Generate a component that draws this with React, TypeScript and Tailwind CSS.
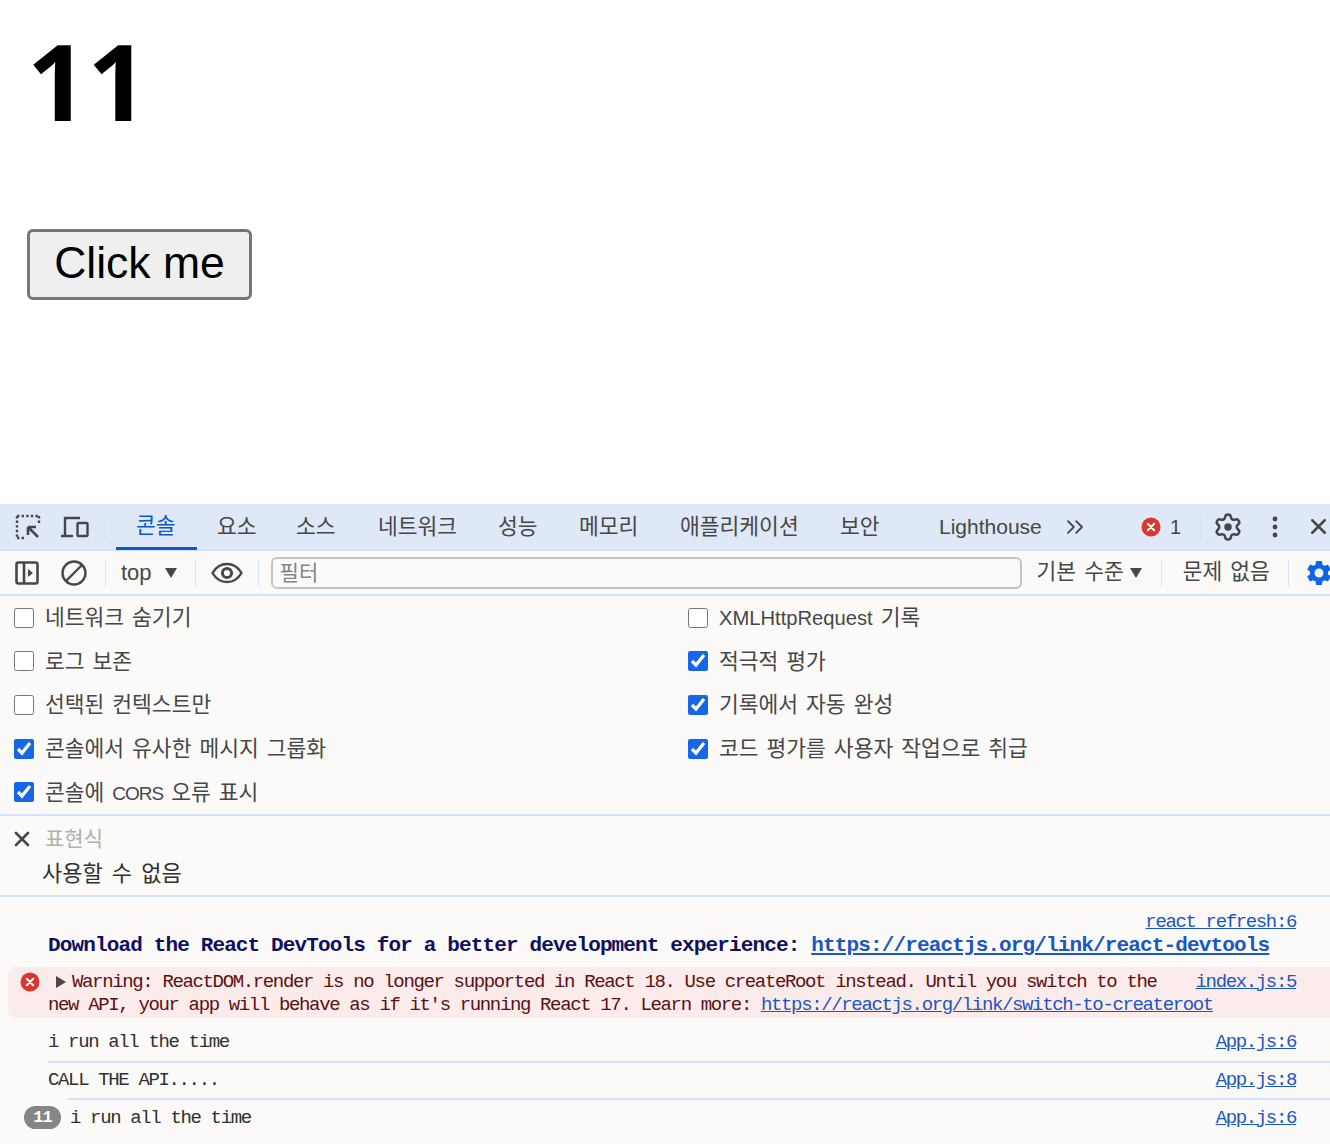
import { ChevronsRight, X } from "lucide-react";
import type { ReactNode } from "react";
import { MdSettings } from "react-icons/md";

const ui = "font-['Liberation_Sans','Noto_Sans_CJK_KR',sans-serif]";
const mono = "font-['Liberation_Mono','Noto_Sans_CJK_KR',monospace]";

const tabs = [
  { label: "콘솔", width: "w-[81px]", active: true },
  { label: "요소", width: "w-[79px]" },
  { label: "소스", width: "w-[82px]" },
  { label: "네트워크", width: "w-[120px]" },
  { label: "성능", width: "w-[81px]" },
  { label: "메모리", width: "w-[101px]" },
  { label: "애플리케이션", width: "w-[160px]" },
  { label: "보안", width: "w-[80px]" },
];

const leftOptions: { id: string; label: ReactNode; checked: boolean }[] = [
  { id: "hide-network", label: "네트워크 숨기기", checked: false },
  { id: "preserve-log", label: "로그 보존", checked: false },
  { id: "selected-context", label: "선택된 컨텍스트만", checked: false },
  { id: "group-similar", label: "콘솔에서 유사한 메시지 그룹화", checked: true },
  {
    id: "cors",
    label: (
      <>
        콘솔에 <span className="text-[19px] tracking-[-1px]">CORS</span> 오류 표시
      </>
    ),
    checked: true,
  },
];

const rightOptions: { id: string; label: ReactNode; checked: boolean }[] = [
  {
    id: "xhr",
    label: (
      <>
        <span className="text-[20.2px]">XMLHttpRequest</span> 기록
      </>
    ),
    checked: false,
  },
  { id: "eager", label: "적극적 평가", checked: true },
  { id: "autocomplete", label: "기록에서 자동 완성", checked: true },
  { id: "user-action", label: "코드 평가를 사용자 작업으로 취급", checked: true },
];

function Sep({ className = "" }: { className?: string }) {
  return <div className={`w-px h-[26px] bg-[#d3e3fd] shrink-0 ${className}`} />;
}

function ErrorIcon({ className = "" }: { className?: string }) {
  return (
    <svg viewBox="0 0 20 20" className={`w-5 h-5 shrink-0 ${className}`}>
      <circle cx="10" cy="10" r="9.5" fill="#dc362e" />
      <path d="M6.8 6.8l6.4 6.4M13.2 6.8l-6.4 6.4" stroke="#fff" strokeWidth="2" strokeLinecap="round" />
    </svg>
  );
}

function Gear({ className = "" }: { className?: string }) {
  return (
    <svg viewBox="0 0 24 24" className={`shrink-0 ${className}`} fill="none" stroke="#474747" strokeWidth="2">
      <path d="M9.671 4.136a2.34 2.34 0 0 1 4.659 0 2.34 2.34 0 0 0 3.319 1.915 2.34 2.34 0 0 1 2.33 4.033 2.34 2.34 0 0 0 0 3.831 2.34 2.34 0 0 1-2.33 4.033 2.34 2.34 0 0 0-3.319 1.915 2.34 2.34 0 0 1-4.659 0 2.34 2.34 0 0 0-3.32-1.915 2.34 2.34 0 0 1-2.33-4.033 2.34 2.34 0 0 0 0-3.831A2.34 2.34 0 0 1 6.35 6.051a2.34 2.34 0 0 0 3.319-1.915" />
      <circle cx="12" cy="12" r="3" fill="#474747" stroke="none" />
    </svg>
  );
}

function Option({ label, checked }: { label: ReactNode; checked: boolean }) {
  return (
    <label className="flex items-center h-[43.6px]">
      <input
        type="checkbox"
        defaultChecked={checked}
        className="w-5 h-5 ml-[14px] mr-[11px] shrink-0 accent-[#1667e8]"
      />
      <span className="mt-[1px] text-[21.5px] [word-spacing:2px] text-[#474747] whitespace-nowrap">{label}</span>
    </label>
  );
}

function Source({ name }: { name: string }) {
  return <span className="ml-auto mr-[34px] underline text-[#1a56c4]">{name}</span>;
}

export default function App() {
  return (
    <div className={`w-[1330px] h-[1144px] overflow-hidden bg-white ${ui}`}>
      {/* PAGE */}
      <div className="h-[504px] pl-[27px]">
        <h1 className="pt-[17px] pb-[3px] text-[106px] leading-[126px] font-bold text-black font-['Open_Sans',sans-serif] [font-kerning:none]">
          11
        </h1>
        <button className="block mt-[83px] w-[225px] h-[71px] pb-[3px] bg-[#efefef] border-[3px] border-[#767676] rounded-[6px] text-[44.5px] leading-[44px] text-black">
          Click me
        </button>
      </div>

      {/* DEVTOOLS */}
      <div className="h-[640px] bg-[#fbfaf9] text-[#474747]">
        {/* TAB BAR */}
        <div className="flex items-center h-[47px] bg-[#dfe8f6] border-b-2 border-[#d3e3fd]">
          <svg viewBox="0 0 26 26" className="w-[26px] h-[26px] ml-[15px] shrink-0" fill="none" stroke="#474747">
            <path d="M2 2h22M2 2v22M2 24h8M24 2v8" strokeWidth="2.4" strokeDasharray="2.4 2.2" />
            <path d="M13 13l10 10M13 13h8M13 13v8" strokeWidth="2.6" />
          </svg>
          <svg viewBox="0 0 30 24" className="w-[30px] h-6 ml-[19px] shrink-0" fill="none" stroke="#474747" strokeWidth="2.4">
            <path d="M5 20V3h15M1 21h12" />
            <rect x="17.5" y="8" width="10" height="13" rx="1" />
          </svg>
          <Sep className="ml-[15px] mr-[10px]" />
          {tabs.map((tab) => (
            <div
              key={tab.label}
              className={`${tab.width} h-[47px] pl-5 pt-[2px] flex items-center shrink-0 text-[21.5px] whitespace-nowrap ${
                tab.active ? "text-[#0b57d0] border-b-[3px] border-[#0b57d0]" : ""
              }`}
            >
              {tab.label}
            </div>
          ))}
          <span className="ml-[39px] w-[122px] shrink-0 text-[21px]">Lighthouse</span>
          <ChevronsRight className="w-[28px] h-[28px] shrink-0 text-[#474747]" strokeWidth={1.6} />
          <ErrorIcon className="ml-[52px]" />
          <span className="ml-[9px] text-[20px]">1</span>
          <Sep className="ml-[19px]" />
          <Gear className="w-[30px] h-[30px] ml-[12px]" />
          <svg viewBox="0 0 6 22" className="w-[6px] h-[22px] ml-[29px] shrink-0" fill="#474747">
            <circle cx="3" cy="3" r="2.4" />
            <circle cx="3" cy="11" r="2.4" />
            <circle cx="3" cy="19" r="2.4" />
          </svg>
          <X className="w-[25px] h-[25px] ml-[28px] shrink-0 text-[#474747]" strokeWidth={2.4} />
        </div>

        {/* FILTER BAR */}
        <div className="flex items-center h-[45px] border-b-2 border-[#d3e3fd] overflow-hidden">
          <svg viewBox="0 0 24 24" className="w-6 h-6 ml-[15px] shrink-0" fill="none" stroke="#474747" strokeWidth="2.6">
            <rect x="1.5" y="1.5" width="21" height="21" rx="2" />
            <path d="M9 2v20" />
            <path d="M13 8l5 4-5 4z" fill="#474747" stroke="none" />
          </svg>
          <svg viewBox="0 0 26 26" className="w-[26px] h-[26px] ml-[22px] shrink-0" fill="none" stroke="#474747" strokeWidth="2.4">
            <circle cx="13" cy="13" r="11.5" />
            <path d="M5 21L21 5" />
          </svg>
          <Sep className="ml-[18px]" />
          <span className="ml-[15px] text-[22px]">top</span>
          <span className="ml-[13px] w-0 h-0 border-x-[6.5px] border-x-transparent border-t-[10px] border-t-[#474747]" />
          <Sep className="ml-[18px]" />
          <svg viewBox="0 0 32 22" className="w-8 h-[22px] ml-[15px] shrink-0" fill="none" stroke="#474747" strokeWidth="2.4">
            <path d="M1.5 11C5 5 10 2 16 2s11 3 14.5 9C27 17 22 20 16 20S5 17 1.5 11z" />
            <circle cx="16" cy="11" r="4.6" strokeWidth="3" />
          </svg>
          <Sep className="ml-[15px]" />
          <div className="ml-[12px] w-[751px] h-[32px] px-[7px] shrink-0 flex items-center rounded-[6px] border-2 border-[#c4c4c4] bg-[#fbfaf9] text-[21px] text-[#80868b]">
            필터
          </div>
          <span className="ml-[15px] text-[21.5px] [word-spacing:2px] whitespace-nowrap">기본 수준</span>
          <span className="ml-[6px] w-0 h-0 border-x-[6.5px] border-x-transparent border-t-[10px] border-t-[#474747]" />
          <Sep className="ml-[19px]" />
          <span className="ml-[21px] text-[21.5px] [word-spacing:2px] whitespace-nowrap">문제 없음</span>
          <Sep className="ml-[18px]" />
          <MdSettings className="w-[30px] h-[30px] ml-[15px] shrink-0 text-[#0b65e8]" />
        </div>

        {/* SETTINGS */}
        <div className="grid grid-cols-[674px_1fr] h-[220px] border-b-2 border-[#d3e3fd]">
          <div>
            {leftOptions.map((o) => (
              <Option key={o.id} label={o.label} checked={o.checked} />
            ))}
          </div>
          <div>
            {rightOptions.map((o) => (
              <Option key={o.id} label={o.label} checked={o.checked} />
            ))}
          </div>
        </div>

        {/* LIVE EXPRESSION */}
        <div className="h-[81px] border-b-2 border-[#d3e3fd]">
          <div className="flex items-center h-[44px] pt-[2px]">
            <X className="w-[24px] h-[24px] ml-[10px] shrink-0 text-[#474747]" strokeWidth={2.6} />
            <span className="ml-[11px] text-[21px] text-[#b0b0b0]">표현식</span>
          </div>
          <div className="pl-[42px] text-[22px] [word-spacing:3px] leading-[28px] text-[#303030]">사용할 수 없음</div>
        </div>

        {/* CONSOLE */}
        <div className={`${mono} text-[19px] leading-[23px] tracking-[-1.36px] text-[#303030] whitespace-pre`}>
          <div className="flex justify-end h-[37px] pt-[14px]">
            <Source name="react_refresh:6" />
          </div>
          <div className="h-[24px] pl-[48px] text-[21px] tracking-[-0.86px] font-bold text-[#101060]">
            Download the React DevTools for a better development experience:{" "}
            <span className="underline text-[#1a56c4]">https://reactjs.org/link/react-devtools</span>
          </div>
          <div className="mt-[9px] ml-2 h-[51px] rounded-l-[8px] bg-[#fcebeb] text-[#5c1010] pt-[3px]">
            <div className="flex items-center h-[24px]">
              <ErrorIcon className="ml-[12px]" />
              <span className="ml-[16px] w-0 h-0 border-y-[6px] border-y-transparent border-l-[10px] border-l-[#474747]" />
              <span className="ml-[6px]">
                Warning: ReactDOM.render is no longer supported in React 18. Use createRoot instead. Until you switch to the
              </span>
              <Source name="index.js:5" />
            </div>
            <div className="pl-[40px]">
              new API, your app will behave as if it's running React 17. Learn more:{" "}
              <span className="underline text-[#1a56c4]">https://reactjs.org/link/switch-to-createroot</span>
            </div>
          </div>
          <div className="flex items-center h-[43px] pt-[6px] pl-[48px]">
            <span>i run all the time</span>
            <Source name="App.js:6" />
          </div>
          <div className="ml-[48px] h-[37px] flex items-center border-t-2 border-[#d3e3fd]">
            <span>CALL THE API.....</span>
            <Source name="App.js:8" />
          </div>
          <div className="flex items-center h-[38px]">
            <span className="ml-[24px] w-[37px] h-[23px] rounded-full bg-[#858585] text-white text-[17px] font-bold flex items-center justify-center tracking-[-1px]">
              11
            </span>
            <div className="ml-[7px] flex-1 h-full flex items-center border-t-2 border-[#d3e3fd] pl-[2px]">
              <span>i run all the time</span>
              <Source name="App.js:6" />
            </div>
          </div>
        </div>
      </div>
    </div>
  );
}
